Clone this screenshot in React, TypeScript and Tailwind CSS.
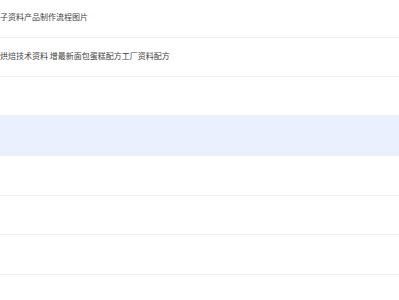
const rows: { text: string; h: string; active?: boolean }[] = [
  { text: '子资料产品制作流程图片', h: 'h-[38px]' },
  { text: '烘焙技术资料 增最新面包蛋糕配方工厂资料配方', h: 'h-[39px]' },
  { text: '', h: 'h-[39px]' },
  { text: '', h: 'h-[40px]', active: true },
  { text: '', h: 'h-[40px]' },
  { text: '', h: 'h-[39px]' },
  { text: '', h: 'h-[40px]' },
  { text: '', h: 'h-[40px]' },
];

export default function App() {
  return (
    <div
      className="h-[300px] w-[399px] overflow-hidden bg-white"
      style={{ fontFamily: '"Noto Sans CJK SC", "Noto Sans", sans-serif' }}
    >
      {rows.map((r, i) => (
        <div
          key={i}
          className={`flex items-center border-b border-[#f0f0f0] pb-[3px] ${r.h} ${
            r.active ? 'border-[#eaf0fd] bg-[#eaf0fd]' : ''
          }`}
        >
          <span className="whitespace-nowrap text-[8px] leading-none text-[#444]">{r.text}</span>
        </div>
      ))}
    </div>
  );
}
